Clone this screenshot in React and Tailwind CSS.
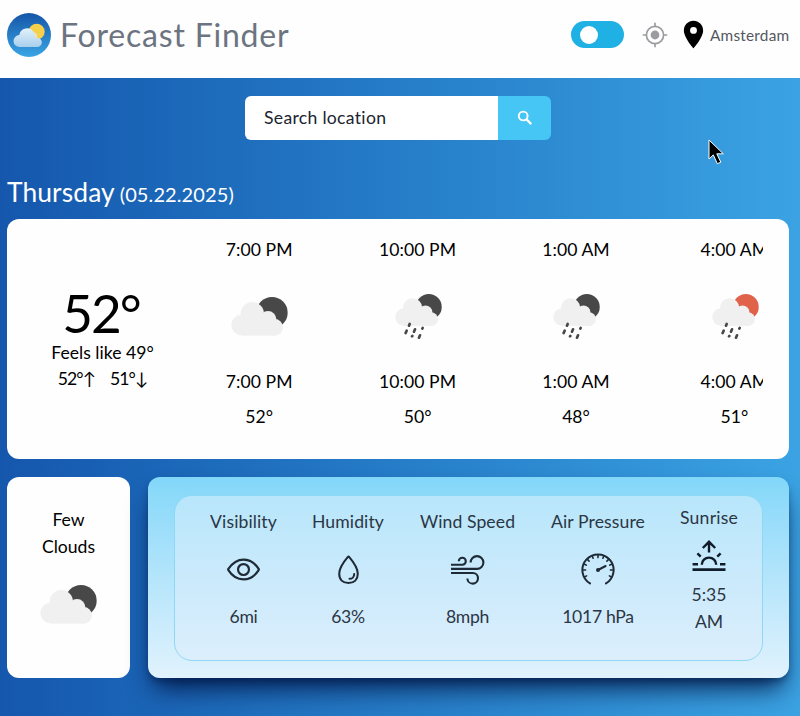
import { MdLocationOn } from "react-icons/md";
import { IoEyeOutline, IoWaterOutline } from "react-icons/io5";

function Logo() {
  return (
    <svg className="h-11 w-11" viewBox="0 0 132 132">
      <defs>
        <linearGradient id="sky" x1="0" y1="0" x2="0" y2="1">
          <stop offset="0" stopColor="#1556a8" />
          <stop offset="1" stopColor="#3aa5e4" />
        </linearGradient>
        <linearGradient id="cloud" x1="0" y1="0" x2="0" y2="1">
          <stop offset="0" stopColor="#e2f1fb" />
          <stop offset="1" stopColor="#a9cfec" />
        </linearGradient>
        <linearGradient id="haze" x1="0" y1="0" x2="1" y2="0">
          <stop offset="0.6" stopColor="#f6e3a0" stopOpacity="0" />
          <stop offset="0.9" stopColor="#f6e3a0" stopOpacity="0.7" />
        </linearGradient>
      </defs>
      <circle cx="66" cy="66" r="66" fill="url(#sky)" />
      <circle cx="89" cy="56" r="24" fill="#f6cf4b" />
      <path
        d="M38 102a18 18 0 0 1-1-36a23 23 0 0 1 43-8a15 15 0 0 1 11 16a14 14 0 0 1-1 28z"
        fill="url(#cloud)"
      />
      <path d="M80 58a15 15 0 0 1 11 16l-30 4l-4-28z" fill="url(#haze)" />
    </svg>
  );
}

function Crosshair() {
  return (
    <svg className="ml-[18px] h-[26px] w-[26px]" viewBox="-13 -13 26 26" fill="none" stroke="#9b9ca0" strokeWidth="1.7">
      <circle r="8.6" />
      <circle r="4.4" fill="#9b9ca0" stroke="none" />
      <path d="M0-12.3v3.6M0 12.3v-3.6M-12.3 0h3.6M12.3 0h-3.6" />
    </svg>
  );
}

function SearchIcon() {
  return (
    <svg className="h-4 w-4" viewBox="0 0 16 16" fill="none" stroke="currentColor" strokeWidth="1.9">
      <circle cx="6.2" cy="6" r="4.4" />
      <path d="M9.3 9.1l5 5" strokeWidth="2.2" />
    </svg>
  );
}

function CloudShape() {
  return (
    <g fill="#f0f0f0">
      <circle cx="32" cy="84" r="31" />
      <circle cx="64" cy="50" r="35" />
      <circle cx="111" cy="67" r="25" />
      <circle cx="131" cy="91" r="25" />
      <rect x="32" y="54" width="100" height="62" />
    </g>
  );
}

function Cloudy() {
  return (
    <svg className="h-[39px] w-[57px]" viewBox="0 0 171 117">
      <circle cx="123" cy="47" r="47" fill="#484848" />
      <CloudShape />
    </svg>
  );
}

function Rainy({ sun }) {
  return (
    <svg className="ml-[2px] h-[45px] w-[47px]" viewBox="0 0 141 135">
      <g transform="scale(.825)">
        <circle cx="123" cy="47" r="47" fill={sun ? "#e0624b" : "#484848"} />
        <CloudShape />
      </g>
      <g stroke="#484848" strokeWidth="8" strokeLinecap="round">
        <path d="M44 90l-2 5M35 110l-3 7M60 106l-3 7M83 102l-1 2M52 126l-1 1M75 124l-3 7" />
      </g>
    </svg>
  );
}

function WindIcon() {
  return (
    <svg className="-mt-px h-8 w-[35px]" viewBox="0 0 35 32" fill="none" stroke="#1f2a37" strokeWidth="2.1">
      <path d="M1 11.8H12.3a3.5 3.5 0 1 0-3.5-3.5M1 15.9H27a6.4 6.4 0 1 0-6.4-6.4M1 20H22.8a5.3 5.3 0 1 1-5.4 5.4" />
    </svg>
  );
}

function GaugeIcon() {
  return (
    <svg className="h-[34px] w-[34px]" viewBox="-17 -17 34 34" fill="none" stroke="#1f2a37" strokeWidth="2" strokeLinecap="round">
      <path d="M-8 13.4A15.6 15.6 0 1 1 8 13.4" />
      <path
        strokeWidth="1.6"
        d="M0-15v2.6M-15 0h2.6M15 0h-2.6M-10.6-10.6l1.7 1.7M10.6-10.6l-1.7 1.7M-5.7-13.8l.8 2M5.7-13.8l-.8 2M-13.8-5.7l2 .8M13.8-5.7l-2 .8M-13.4 7l2-1.1M13.4 7l-2-1.1"
      />
      <path d="M0 0L7.6-4" />
      <circle r="2" fill="#1f2a37" stroke="none" />
    </svg>
  );
}

function SunriseIcon() {
  return (
    <svg className="h-[31px] w-[34px]" viewBox="0 0 34 31" fill="none" stroke="#111c2b" strokeWidth="2.4">
      <path d="M17 12.5V2M10.8 8L17 1.8L23.2 8M9.8 24.8a7.2 7.2 0 0 1 14.4 0M.6 24.3h5.4M28 24.3h5.4M5.4 13.4l3.3 3.3M28.6 13.4l-3.3 3.3" />
      <path d="M.5 29.6h33" strokeWidth="2.6" />
    </svg>
  );
}

const hours = [
  { time: "7:00 PM", temp: "52°", icon: <Cloudy /> },
  { time: "10:00 PM", temp: "50°", icon: <Rainy /> },
  { time: "1:00 AM", temp: "48°", icon: <Rainy /> },
  { time: "4:00 AM", temp: "51°", icon: <Rainy sun /> },
];

const details = [
  { label: "Visibility", value: "6mi", width: "w-[67px]", icon: <IoEyeOutline size={35} /> },
  { label: "Humidity", value: "63%", width: "w-[72px]", icon: <IoWaterOutline size={33} /> },
  { label: "Wind Speed", value: "8mph", width: "w-[97px]", icon: <WindIcon /> },
  { label: "Air Pressure", value: "1017 hPa", width: "w-[94px]", icon: <GaugeIcon /> },
];

function Header() {
  return (
    <header className="flex h-[78px] items-start justify-between bg-[#fefefe] pr-[10px] pl-[7px]">
      <div className="flex items-center pt-3">
        <Logo />
        <h1 className="ml-[9px] pt-px text-[32px] leading-[44px] tracking-[0.8px] whitespace-nowrap text-[#6b7480]">
          Forecast Finder
        </h1>
      </div>
      <div className="flex h-[69px] items-center">
        <div className="flex h-[27px] w-[53px] items-center rounded-full bg-[#1fb0e4] pl-[9px]">
          <div className="h-[18px] w-[18px] rounded-full bg-white" />
        </div>
        <Crosshair />
        <MdLocationOn size={33} className="-mt-px ml-[9px] text-black" />
        <span className="w-[80px] pt-px text-[15.4px] tracking-[0.2px] whitespace-nowrap text-[#55585f]">Amsterdam</span>
      </div>
    </header>
  );
}

export default function App() {
  return (
    <div
      className="relative h-[716px] w-[800px] overflow-hidden bg-linear-to-r from-[#1557ad] to-[#3ba3e3] text-[17.6px] leading-[26.4px] text-black [font-variant-ligatures:none]"
      style={{ fontFamily: 'Lato, "Liberation Sans", sans-serif' }}
    >
      <Header />
      <main className="pr-[11px] pl-[7px]">
        <div className="ml-[238px] flex h-[62px] w-[306px] pt-[18px]">
          <div className="flex flex-1 items-center rounded-l-md bg-white pl-[19px] text-[#1b2430]">
            <span className="tracking-[0.3px]">Search location</span>
          </div>
          <button className="flex w-[53px] items-center justify-center rounded-r-md bg-[#45c6f5] text-white">
            <SearchIcon />
          </button>
        </div>

        <h2 className="flex h-[79px] items-baseline gap-[5px] pt-[35px] leading-[34px] whitespace-nowrap text-white">
          <span className="text-[26.4px] tracking-[0.1px]">Thursday</span>
          <span className="text-[20px] tracking-[0.1px]">(05.22.2025)</span>
        </h2>

        <section className="flex h-[240px] rounded-xl bg-[#fefefe]">
          <div className="flex w-[173px] shrink-0 flex-col items-center pt-[66px] pl-[18px]">
            <div className="pr-[3px] text-[53px] leading-[55px] tracking-[-2px]">52°</div>
            <div>Feels like 49°</div>
            <div className="flex gap-[15px] tracking-[-0.9px]">
              <span>52°↑</span>
              <span>51°↓</span>
            </div>
          </div>
          <div className="flex w-[583px] overflow-hidden">
            {hours.map((h) => (
              <div key={h.time} className="flex w-[158.4px] shrink-0 flex-col items-center whitespace-nowrap">
                <div className="mt-[18px] tracking-[0.05px]">{h.time}</div>
                <div className="flex h-[106px] items-center">{h.icon}</div>
                <div className="tracking-[0.05px]">{h.time}</div>
                <div className="mt-[8px]">{h.temp}</div>
              </div>
            ))}
          </div>
        </section>

        <div className="mt-[18px] flex gap-[18px]">
          <section className="flex h-[201px] w-[123px] flex-col items-center rounded-xl bg-[#fefefe] pt-[30.4px]">
            <div>Few</div>
            <div>Clouds</div>
            <div className="mt-[24.6px]">
              <Cloudy />
            </div>
          </section>
          <section className="h-[201px] w-[641px] rounded-xl bg-linear-to-b from-[#82d7f9] to-[#e1f2fd] px-[26px] py-[18px] shadow-[0_16px_26px_-6px_rgba(0,20,65,0.9),0_5px_6px_-1px_rgba(0,20,65,0.35)]">
            <div className="flex h-[166px] w-[589px] gap-[35px] rounded-[18px] border border-[#8fd8f5] bg-linear-to-b from-[#b8e6fb] to-[#dceefc] pl-[35px] text-[#1f2a37]">
              {details.map((d) => (
                <div key={d.label} className={`flex shrink-0 flex-col items-center whitespace-nowrap ${d.width}`}>
                  <div className="mt-[13px] tracking-[0.1px] text-[#2b3644]">{d.label}</div>
                  <div className="flex h-[69px] items-center">{d.icon}</div>
                  <div className="tracking-[-0.3px] text-[#2b3644]">{d.value}</div>
                </div>
              ))}
              <div className="flex w-[58px] shrink-0 flex-col items-center text-[#2b3644]">
                <div className="mt-[9px] tracking-[0.2px]">Sunrise</div>
                <div className="mt-[9px] mb-[11px]">
                  <SunriseIcon />
                </div>
                <div>5:35</div>
                <div>AM</div>
              </div>
            </div>
          </section>
        </div>
      </main>
      <svg className="absolute top-[138px] left-[707px] h-7 w-5" viewBox="0 0 20 28">
        <path d="M2 2v19l4.3-4.1 4 8.8 3.5-1.5-4-8.4h6.5z" fill="#000" stroke="#fff" strokeWidth="1" />
      </svg>
    </div>
  );
}
